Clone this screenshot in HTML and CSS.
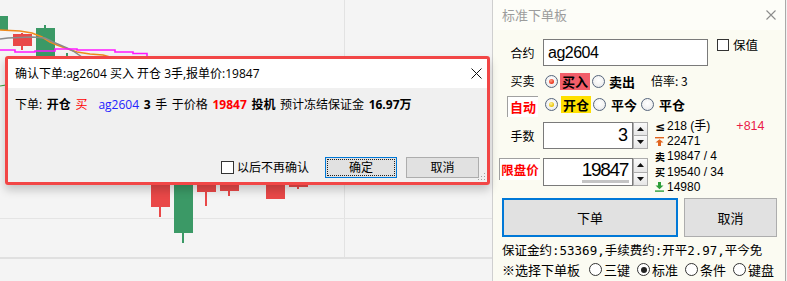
FILE: index.html
```html
<!DOCTYPE html>
<html lang="zh">
<head>
<meta charset="utf-8">
<title>下单</title>
<link rel="stylesheet" href="styles.css">
</head>
<body>
<div class="screen">
  <div class="chart">
    <svg class="chart-svg" width="492" height="281" viewBox="0 0 492 281">
      <line x1="344.5" y1="0" x2="344.5" y2="258" stroke="#e2e2e2"/>
      <line x1="0" y1="218.5" x2="492" y2="218.5" stroke="#e4e4e4"/>
      <rect x="0" y="257" width="492" height="2" fill="#e0e0e0"/>
      <rect x="0" y="16" width="8" height="14" fill="#3b9966"/>
      <rect x="21" y="33" width="2" height="17" fill="#e94848"/>
      <rect x="13" y="34" width="19" height="12" fill="#e94848"/>
      <rect x="44" y="25" width="2" height="5" fill="#3b9966"/>
      <rect x="36" y="28" width="19" height="40" fill="#3b9966"/>
      <rect x="66" y="53" width="2" height="6" fill="#3b9966"/>
      <rect x="159" y="180" width="2" height="37" fill="#e94848"/>
      <rect x="151" y="150" width="19" height="57" fill="#e94848"/>
      <rect x="182" y="180" width="2" height="63" fill="#3b9966"/>
      <rect x="174" y="120" width="19" height="113" fill="#3b9966"/>
      <rect x="205" y="180" width="2" height="26" fill="#e94848"/>
      <rect x="197" y="170" width="19" height="22" fill="#e94848"/>
      <rect x="228" y="180" width="2" height="16" fill="#e94848"/>
      <rect x="220" y="170" width="19" height="21" fill="#e94848"/>
      <rect x="249" y="180" width="16" height="2" fill="#c84040"/>
      <rect x="266" y="170" width="19" height="29" fill="#e94848"/>
      <rect x="297" y="180" width="2" height="9" fill="#e94848"/>
      <rect x="289" y="170" width="19" height="17" fill="#e94848"/>
      <polyline fill="none" stroke="#f08a1c" stroke-width="1.6" points="0,30 20,31 32,33 37,35 42,37 50,42 57,45 65,48 77,52 90,54 103,55 110,57"/>
      <polyline fill="none" stroke="#8a8a8a" stroke-width="1.5" points="0,39 8,38 32,37 45,38 53,42 60,45 67,48 73,51 82,57"/>
      <polyline fill="none" stroke="#ff1aff" stroke-width="1.6" points="0,50 15,50 15,52 35,52 35,51 55,51 55,49 77,49 77,50 115,50 115,52 133,52 133,53.5 147,53.5 147,57"/>
      <polyline fill="none" stroke="#3aa040" stroke-width="1.2" points="0,86 6,85"/>
    </svg>

    <div class="dlg">
      <div class="dlg-title">
        <span>确认下单:ag2604 买入 开仓 3手,报单价:19847</span>
        <svg class="dlg-x" width="11" height="11" viewBox="0 0 11 11"><path d="M0.5 0.5L10.5 10.5M10.5 0.5L0.5 10.5" stroke="#111" stroke-width="1"/></svg>
      </div>
      <div class="dlg-body">
        <div class="msg">下单: <b>开仓</b> <span class="red">买</span><span class="gap"></span><span class="blue">ag2604</span> <b>3</b> 手 于价格 <b class="red">19847</b> <b>投机</b> 预计冻结保证金 <b>16.97万</b></div>
        <div class="dlg-foot">
          <span class="chk"><span class="chk-box"></span>以后不再确认</span>
          <span class="btn focus"><span class="focus-ring">确定</span></span>
          <span class="btn">取消</span>
        </div>
        <svg class="grip" width="8" height="8" viewBox="0 0 8 8">
          <rect x="6" y="0" width="1" height="1" fill="#a0a0a0"/>
          <rect x="3" y="3" width="1" height="1" fill="#a0a0a0"/>
          <rect x="6" y="3" width="1" height="1" fill="#a0a0a0"/>
          <rect x="0" y="6" width="1" height="1" fill="#a0a0a0"/>
          <rect x="3" y="6" width="1" height="1" fill="#a0a0a0"/>
          <rect x="6" y="6" width="1" height="1" fill="#a0a0a0"/>
        </svg>
      </div>
    </div>
  </div>

  <div class="panel">
    <div class="p-title">
      <span>标准下单板</span>
      <svg width="10" height="10" viewBox="0 0 10 10"><path d="M0.5 0.5L9.5 9.5M9.5 0.5L0.5 9.5" stroke="#8c8c8c" stroke-width="1.1"/></svg>
    </div>
    <div class="p-body">
      <div class="row r-code">
        <span class="lbl">合约</span>
        <div class="field code">ag2604</div>
        <span class="cb"></span><span class="cb-txt">保值</span>
      </div>
      <div class="row r-side">
        <span class="lbl">买卖</span>
        <span class="rd on"></span><span class="chip pink">买入</span>
        <span class="rd"></span><span class="chip">卖出</span>
        <span class="ratio">倍率: 3</span>
      </div>
      <div class="row r-oc">
        <span class="auto">自动</span>
        <span class="rd on yel"></span><span class="chip yellow">开仓</span>
        <span class="rd"></span><span class="chip">平今</span>
        <span class="rd"></span><span class="chip">平仓</span>
      </div>
      <div class="mid">
        <div class="qp">
          <div class="row r-qty">
            <span class="lbl">手数</span>
            <div class="field num qty">3</div>
            <div class="spin">
              <span class="sb"><svg width="7" height="4" viewBox="0 0 7 4"><path d="M3.5 0L7 4H0z" fill="#111"/></svg></span>
              <span class="sb"><svg width="7" height="4" viewBox="0 0 7 4"><path d="M0 0H7L3.5 4z" fill="#111"/></svg></span>
            </div>
          </div>
          <div class="row r-price">
            <span class="plbl">限盘价</span>
            <div class="field num price"><span class="pv">19847</span></div>
            <div class="spin tall">
              <span class="sb"><svg width="7" height="4" viewBox="0 0 7 4"><path d="M3.5 0L7 4H0z" fill="#111"/></svg></span>
              <span class="sb"><svg width="7" height="4" viewBox="0 0 7 4"><path d="M0 0H7L3.5 4z" fill="#111"/></svg></span>
            </div>
          </div>
        </div>
        <div class="info">
          <div class="irow"><span class="ic le">≤</span><span>218 (手)</span><span class="chg">+814</span></div>
          <div class="irow"><span class="ic"><svg width="9" height="9" viewBox="0 0 9 9"><rect x="0" y="0" width="9" height="1.4" fill="#e0641e"/><path d="M4.5 2.2L8.5 5.6H6V9H3V5.6H0.5z" fill="#e0641e"/></svg></span><span>22471</span></div>
          <div class="irow"><span class="ic tiny">卖</span><span>19847 / 4</span></div>
          <div class="irow"><span class="ic tiny">买</span><span>19540 / 34</span></div>
          <div class="irow"><span class="ic"><svg width="9" height="10" viewBox="0 0 9 10"><path d="M3 0H6V3.6H8.5L4.5 7.2L0.5 3.6H3z" fill="#2e9e3a"/><rect x="0" y="8.4" width="9" height="1.4" fill="#2e9e3a"/></svg></span><span>14980</span></div>
        </div>
      </div>
      <div class="btns">
        <span class="pbtn main">下单</span>
        <span class="pbtn">取消</span>
      </div>
      <div class="note">保证金约:53369,手续费约:开平2.97,平今免</div>
      <div class="pick">
        <span>※选择下单板</span>
        <span class="rd2 first"></span><span>三键</span>
        <span class="rd2 on"></span><span>标准</span>
        <span class="rd2"></span><span>条件</span>
        <span class="rd2"></span><span>键盘</span>
      </div>
    </div>
  </div>
</div>
</body>
</html>
```

FILE: styles.css
```css
* { box-sizing: border-box; margin: 0; padding: 0; }
body {
  margin: 0;
  background: #f4f4f4;
  font-family: "Noto Sans CJK SC", "Noto Sans", sans-serif;
  color: #000;
}
.screen {
  display: flex;
  width: 787px;
  height: 281px;
  overflow: hidden;
  background: #f4f4f4;
}

/* chart canvas */
.chart {
  position: relative;
  flex: none;
  width: 492px;
  height: 281px;
  background: #f4f4f4;
}
.chart-svg { position: absolute; left: 0; top: 0; }

/* confirmation dialog (floating window) */
.dlg {
  position: absolute;
  left: 5px;
  top: 56px;
  width: 485px;
  height: 129px;
  border: 3px solid #f24646;
  border-radius: 3px;
  display: flex;
  flex-direction: column;
  box-shadow: 0 5px 10px rgba(0, 0, 0, 0.2);
  font-family: "Open Sans", "Noto Sans CJK SC", sans-serif;
  font-size: 12px;
  line-height: 16px;
}
.dlg-title {
  height: 29px;
  flex: none;
  background: #fff;
  display: flex;
  align-items: center;
  justify-content: space-between;
  padding: 0 5px 0 7px;
}
.dlg-body {
  position: relative;
  flex: 1;
  background: #f0f0f0;
  display: flex;
  flex-direction: column;
  padding: 9px 8px 4px 7px;
}
.msg { white-space: nowrap; word-spacing: 1.5px; }
.msg b { font-weight: bold; }
.red { color: #ff0000; }
.blue { color: #2323ff; }
.gap { display: inline-block; width: 11px; }
.dlg-foot {
  margin-top: auto;
  display: flex;
  align-items: center;
  justify-content: flex-end;
}
.chk {
  display: flex;
  align-items: center;
  gap: 3px;
  margin-right: 16px;
}
.chk-box {
  width: 13px;
  height: 13px;
  border: 1px solid #333;
  background: #fff;
}
.btn {
  width: 73px;
  height: 21px;
  border: 1px solid #adadad;
  background: #e1e1e1;
  display: flex;
  align-items: center;
  justify-content: center;
}
.btn.focus {
  width: 72px;
  margin-right: 9px;
  border-color: #0078d7;
  padding: 1px;
}
.focus-ring {
  width: 100%;
  height: 100%;
  border: 1px dotted #222;
  display: flex;
  align-items: center;
  justify-content: center;
}
.grip { position: absolute; right: 1px; bottom: 1px; }

/* order panel */
.panel {
  flex: none;
  width: 294px;
  height: 281px;
  background: #fbfbf2;
  border-left: 1px solid #cfcfcf;
  border-right: 1px solid #aaaaaa;
  box-shadow: -2px 0 4px rgba(0, 0, 0, 0.12);
  font-size: 12px;
  line-height: 16px;
}
.p-title {
  height: 30px;
  display: flex;
  align-items: center;
  justify-content: space-between;
  padding: 0 9px 0 9px;
  color: #9c9c9c;
  font-size: 13px;
  background: #fdfdf8;
}
.p-body { padding-left: 9px; }
.row { display: flex; align-items: center; }
.lbl { flex: none; width: 41px; text-align: center; }
.field { background: #fff; border: 1px solid #7a7a7a; }

.r-code { margin-top: 9px; align-items: flex-start; }
.r-code .lbl { line-height: 27px; }
.code {
  width: 165px;
  height: 27px;
  padding-left: 4px;
  font-family: "Liberation Sans", Arial, sans-serif;
  font-size: 16px;
  line-height: 25px;
  letter-spacing: -0.5px;
}
.cb {
  width: 12px;
  height: 12px;
  margin-left: 9px;
  border: 1px solid #333;
  background: #fff;
}
.cb-txt { margin-left: 4px; line-height: 12px; font-size: 12.5px; }

.rd {
  position: relative;
  flex: none;
  width: 13px;
  height: 13px;
  margin-left: 2px;
  border-radius: 50%;
  border: 1px solid #56657c;
  background: radial-gradient(circle at 50% 40%, #ffffff 0, #f2f2f2 55%, #d9dee6 100%);
}
.rd.on::after {
  content: "";
  position: absolute;
  left: 3px;
  top: 3px;
  width: 5px;
  height: 5px;
  border-radius: 50%;
  background: radial-gradient(circle at 40% 35%, #ff9a80 0, #e8321a 70%);
}
.rd.on.yel::after { background: radial-gradient(circle at 40% 35%, #fff6a0 0, #e8c000 70%); }
.chip {
  flex: none;
  margin-left: 2px;
  padding: 0 2px;
  height: 17px;
  line-height: 17px;
  font-size: 13px;
  font-weight: bold;
}
.pink { background: #f25e6a; }
.yellow { background: #ffe000; }
.r-side { margin-top: 6px; height: 18px; }
.ratio { margin-left: 14px; }

.r-oc { margin-top: 6px; height: 21px; align-items: flex-start; }
.auto {
  flex: none;
  width: 31px;
  height: 21px;
  margin-left: 5px;
  border-top: 1px solid #a0a0a0;
  border-left: 1px solid #a0a0a0;
  background: #fff;
  color: #ff0000;
  font-weight: bold;
  font-size: 13px;
  line-height: 20px;
  text-align: center;
}
.r-oc .rd { margin-top: 2px; }
.r-oc .auto + .rd { margin-left: 7px; }
.r-oc .chip { margin-left: 3px; }

.mid { display: flex; margin-top: 2px; height: 76px; }
.qp { flex: none; width: 146px; padding-top: 3px; }
.num {
  width: 90px;
  text-align: right;
  font-family: "Liberation Sans", Arial, sans-serif;
}
.qty {
  height: 27px;
  font-size: 18px;
  line-height: 25px;
  padding-right: 4px;
}
.spin {
  flex: none;
  width: 15px;
  height: 27px;
  display: flex;
  flex-direction: column;
}
.spin.tall { height: 28px; }
.sb {
  flex: 1;
  display: flex;
  align-items: center;
  justify-content: center;
  border: 1px solid #acacac;
  background: linear-gradient(#fafafa, #e6e6e6);
}
.sb + .sb { border-top: none; }
.r-price { margin-top: 9px; align-items: flex-start; }
.plbl {
  flex: none;
  width: 41px;
  height: 22px;
  margin-left: -3px;
  margin-right: 3px;
  border-top: 1px solid #a0a0a0;
  border-left: 1px solid #a0a0a0;
  background: #fff;
  color: #ff0000;
  font-weight: bold;
  font-size: 12.5px;
  line-height: 21px;
  text-align: center;
}
.price {
  height: 28px;
  padding-right: 3px;
  display: flex;
  justify-content: flex-end;
}
.pv {
  display: inline-block;
  height: 24px;
  font-size: 19px;
  line-height: 22px;
  letter-spacing: -1.3px;
  padding-right: 1px;
  border-bottom: 3px solid #c4c4c4;
}

.info {
  margin-left: 7px;
  font-family: "Liberation Sans", "Noto Sans CJK SC", sans-serif;
  font-size: 12px;
  line-height: 15px;
  white-space: nowrap;
}
.irow { display: flex; align-items: center; height: 15.2px; overflow: hidden; }
.ic {
  flex: none;
  width: 12px;
  height: 14px;
  display: flex;
  align-items: center;
  font-size: 10px;
  line-height: 14px;
}
.ic.le { font-family: "DejaVu Sans", sans-serif; font-size: 12px; font-weight: bold; }
.ic.tiny { font-family: "Noto Sans CJK SC", sans-serif; font-weight: bold; font-size: 10px; }
.chg { margin-left: 26px; color: #ea1b48; font-size: 12.5px; }

.btns { display: flex; margin-top: 3px; }
.pbtn {
  height: 39px;
  display: flex;
  align-items: center;
  justify-content: center;
  background: #e1e1e1;
  border: 1px solid #adadad;
  font-size: 13px;
}
.pbtn.main { width: 176px; border: 2px solid #0078d7; }
.pbtn.main + .pbtn { width: 93px; margin-left: 6px; }

.note {
  margin-top: 4px;
  line-height: 19px;
  font-family: "DejaVu Sans Mono", "Noto Sans CJK SC", monospace;
  font-size: 12.5px;
  white-space: nowrap;
}
.pick {
  display: flex;
  align-items: center;
  height: 19px;
  font-size: 13px;
  white-space: nowrap;
}
.rd2 {
  position: relative;
  flex: none;
  width: 13px;
  height: 13px;
  margin: 0 2px 0 7px;
  border-radius: 50%;
  border: 1px solid #333;
  background: #fff;
}
.rd2.first { margin-left: 9px; }
.rd2.on::after {
  content: "";
  position: absolute;
  left: 2.5px;
  top: 2.5px;
  width: 6px;
  height: 6px;
  border-radius: 50%;
  background: #222;
}
```
